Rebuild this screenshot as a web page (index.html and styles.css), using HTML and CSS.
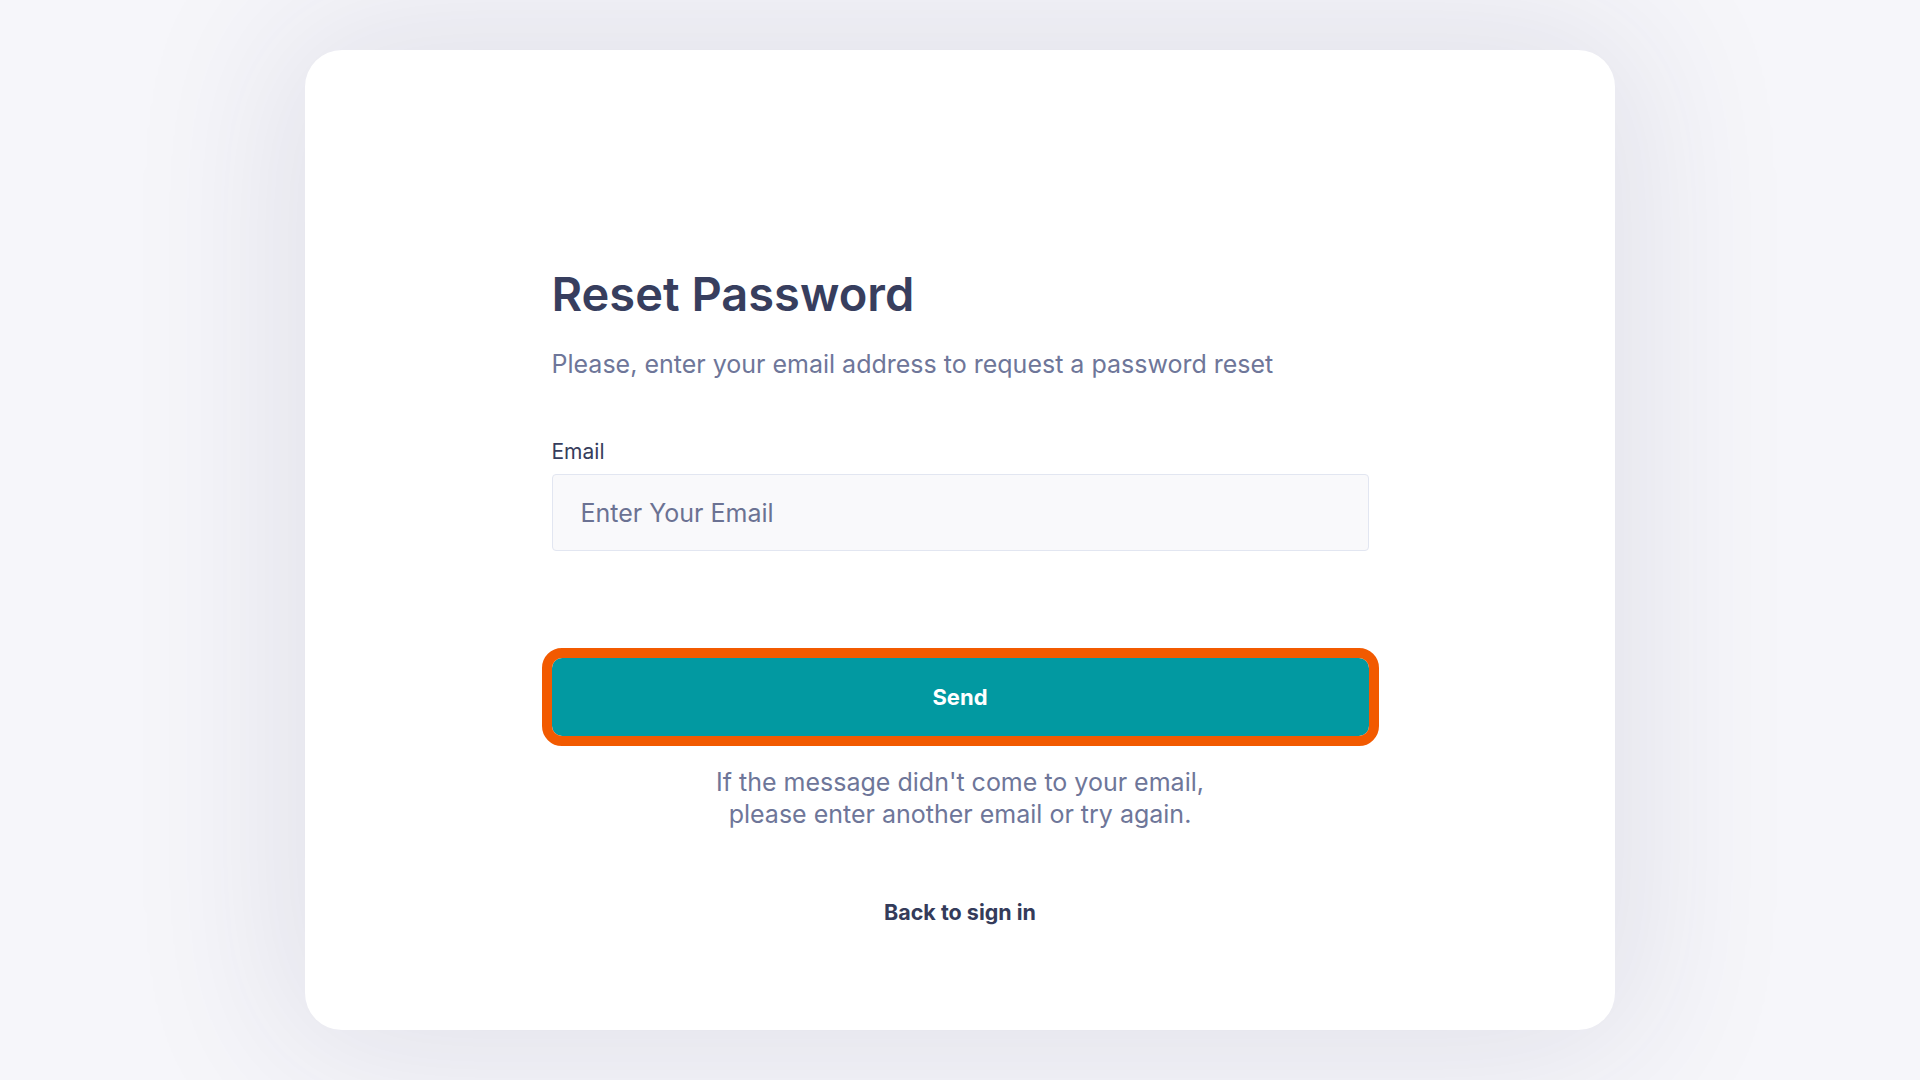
FILE: index.html
```html
<!DOCTYPE html>
<html lang="en">
<head>
<meta charset="utf-8">
<title>Reset Password</title>
<link rel="stylesheet" href="styles.css">
</head>
<body>
<main class="page">
  <section class="card">
    <form class="form" onsubmit="return false">
      <h1 class="title">Reset Password</h1>
      <p class="subtitle">Please, enter your email address to request a password reset</p>
      <label class="label" for="email">Email</label>
      <input class="input" id="email" type="email" placeholder="Enter Your Email">
      <button class="send" type="submit">Send</button>
      <p class="help">If the message didn't come to your email,<br>please enter another email or try again.</p>
      <a class="back" href="#">Back to sign in</a>
    </form>
  </section>
</main>
</body>
</html>
```
FILE: styles.css
```css
* { box-sizing: border-box; }
html, body {
  margin: 0;
  height: 100%;
}
body {
  background: #f6f6fa;
  font-family: Inter, "Noto Sans", sans-serif;
}
.page {
  height: 1080px;
  display: flex;
  align-items: center;
  justify-content: center;
}
.card {
  width: 1310px;
  height: 980px;
  background: #ffffff;
  border-radius: 37px;
  box-shadow: 0 0 160px 24px rgba(40, 40, 90, 0.1);
  padding-top: 216px;
}
.form {
  width: 817px;
  margin: 0 auto;
  display: flex;
  flex-direction: column;
}
.title {
  margin: 0;
  font-size: 47px;
  line-height: 56px;
  font-weight: 600;
  color: #373e5e;
}
.subtitle {
  margin: 26px 0 0;
  font-size: 25px;
  line-height: 32px;
  color: #6e7699;
}
.label {
  margin-top: 60px;
  font-size: 21px;
  line-height: 24px;
  color: #363d5c;
}
.input {
  margin-top: 10px;
  height: 77px;
  width: 100%;
  border: 1px solid #e2e6f1;
  border-radius: 4px;
  background: #f9f9fb;
  padding: 0 28px;
  font-family: inherit;
  font-size: 25px;
  color: #363d5c;
  outline: none;
}
.input::placeholder {
  color: #6b7293;
}
.send {
  margin-top: 107px;
  height: 78px;
  width: 100%;
  border: none;
  border-radius: 10px;
  background: #0299a1;
  outline: 10px solid #f25a00;
  color: #ffffff;
  font-family: inherit;
  font-size: 22px;
  font-weight: 700;
  cursor: pointer;
}
.help {
  margin: 30px 0 0;
  text-align: center;
  font-size: 25px;
  line-height: 32px;
  color: #6e7699;
}
.back {
  margin-top: 70px;
  align-self: center;
  font-size: 21.5px;
  line-height: 24px;
  font-weight: 700;
  color: #343b5a;
  text-decoration: none;
}
```
